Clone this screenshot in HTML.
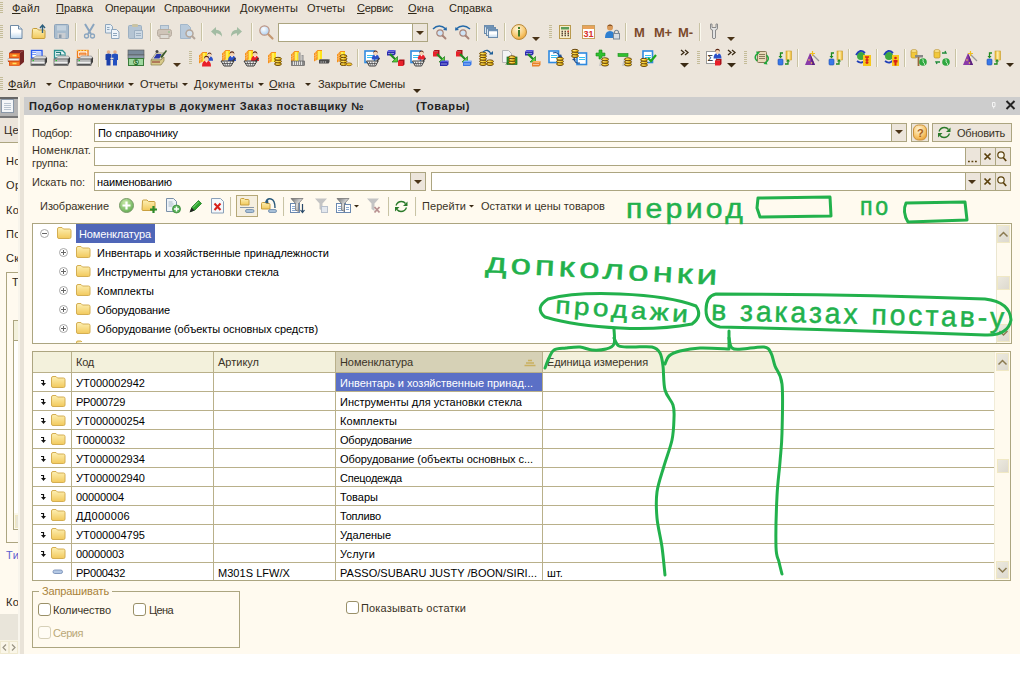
<!DOCTYPE html><html lang="ru"><head><meta charset="utf-8"><title>Подбор номенклатуры</title><style>
html,body{margin:0;padding:0;background:#fff;}
body{width:1022px;height:675px;overflow:hidden;position:relative;font-family:"Liberation Sans",sans-serif;font-size:11px;}
.a{position:absolute;box-sizing:border-box;}
.t{position:absolute;white-space:nowrap;line-height:1;height:1em;}
u{text-decoration:underline;}
svg{position:absolute;overflow:visible;}

</style></head><body>
<div class="a" style="left:0;top:0;width:1020px;height:654px;background:#ece5db"></div>
<div class="a" style="left:278px;top:23px;width:150px;height:19px;background:#fff;border:1px solid #aca580"></div>
<div class="a" style="left:412px;top:24px;width:15px;height:17px;background:#ece5db;border-left:1px solid #aca580"></div>
<div class="a" style="left:0;top:97px;width:18px;height:557px;overflow:hidden;background:#fffaef"><div class="a" style="left:0;top:0;width:18px;height:21px;background:#b4b4b4;border-top:2px solid #666;border-bottom:2px solid #777"></div><div class="a" style="left:0;top:21px;width:18px;height:25px;background:#ece5db;border-bottom:1px solid #aca580"></div><div class="a" style="left:6px;top:175px;width:20px;height:271px;border:1px solid #aca580"></div><div class="a" style="left:13px;top:223px;width:20px;height:210px;border:1px solid #aca580;background:#fff"></div><div class="a" style="left:14px;top:224px;width:20px;height:20px;background:#f3f1dc;border-bottom:1px solid #aca580"></div><div class="a" style="left:14px;top:416px;width:20px;height:16px;background:#fbf8ec"></div><div class="a" style="left:15px;top:418px;width:10px;height:13px;background:#e8e4d4;border:1px solid #f0e8c0"></div><div class="a" style="left:0;top:517px;width:18px;height:26px;background:#e9e5da"></div><div class="a" style="left:0;top:543px;width:18px;height:14px;background:#f7f3e4"></div><span class="t" style="left:4px;top:28px;color:#2e2716;letter-spacing:.4px">Цен</span><span class="t" style="left:6px;top:59px;color:#2e2716;letter-spacing:.4px">Ном</span><span class="t" style="left:6px;top:83px;color:#2e2716;letter-spacing:.4px">Орг</span><span class="t" style="left:6px;top:108px;color:#2e2716;letter-spacing:.4px">Кон</span><span class="t" style="left:6px;top:132px;color:#2e2716;letter-spacing:.4px">Пол</span><span class="t" style="left:6px;top:156px;color:#2e2716;letter-spacing:.4px">Скл</span><span class="t" style="left:12px;top:180px;color:#2e2716;letter-spacing:.4px">То</span><span class="t" style="left:6px;top:453px;color:#5b5fd0;letter-spacing:.4px">Тип</span><span class="t" style="left:6px;top:500px;color:#2e2716;letter-spacing:.4px">Ком</span></div>
<div class="a" style="left:18px;top:97px;width:2px;height:557px;background:#f8f5ec"></div>
<div class="a" style="left:20px;top:97px;width:4px;height:557px;background:#e9e3d8"></div>
<div class="a" style="left:24px;top:97px;width:996px;height:557px;background:#fffaef"></div>
<div class="a" style="left:24px;top:97px;width:996px;height:18px;background:#cdcdcd"></div>
<div class="a" style="left:94px;top:123px;width:813px;height:19px;background:#fff;border:1px solid #aca580;"></div>
<div class="a" style="left:891px;top:124px;width:15px;height:17px;background:#ece5db;border-left:1px solid #aca580"></div>
<div class="a" style="left:911px;top:123px;width:18px;height:19px;background:#ece5db;border:1px solid #aca580;"></div>
<div class="a" style="left:932px;top:123px;width:80px;height:19px;background:#ece5db;border:1px solid #aca580;"></div>
<div class="a" style="left:94px;top:147px;width:917px;height:19px;background:#fff;border:1px solid #aca580;"></div>
<div class="a" style="left:965px;top:148px;width:15px;height:17px;background:#ece5db;border-left:1px solid #aca580"></div>
<div class="a" style="left:980px;top:148px;width:15px;height:17px;background:#ece5db;border-left:1px solid #aca580"></div>
<div class="a" style="left:995px;top:148px;width:15px;height:17px;background:#ece5db;border-left:1px solid #aca580"></div>
<div class="a" style="left:94px;top:172px;width:332px;height:19px;background:#fff;border:1px solid #aca580;"></div>
<div class="a" style="left:410px;top:173px;width:15px;height:17px;background:#ece5db;border-left:1px solid #aca580"></div>
<div class="a" style="left:431px;top:172px;width:580px;height:19px;background:#fff;border:1px solid #aca580;"></div>
<div class="a" style="left:965px;top:173px;width:15px;height:17px;background:#ece5db;border-left:1px solid #aca580"></div>
<div class="a" style="left:980px;top:173px;width:15px;height:17px;background:#ece5db;border-left:1px solid #aca580"></div>
<div class="a" style="left:995px;top:173px;width:15px;height:17px;background:#ece5db;border-left:1px solid #aca580"></div>
<div class="a" style="left:236px;top:195px;width:22px;height:22px;background:#f5efe0;border:1px solid #b5a878;"></div>
<div class="a" style="left:32px;top:223px;width:980px;height:121px;background:#fff;border:1px solid #aca580;"></div>
<div class="a" style="left:996px;top:224px;width:15px;height:119px;background:#fffaee;border-left:1px solid #ebe6d0"></div>
<div class="a" style="left:997px;top:225px;width:13px;height:18px;background:linear-gradient(135deg,#ece9de,#ddd9cf);border:1px solid #f0e8c4"></div>
<div class="a" style="left:997px;top:276px;width:13px;height:14px;background:linear-gradient(135deg,#ece9de,#ddd9cf);border:1px solid #f0e8c4"></div>
<div class="a" style="left:997px;top:324px;width:13px;height:18px;background:linear-gradient(135deg,#ece9de,#ddd9cf);border:1px solid #f0e8c4"></div>
<div class="a" style="left:76px;top:224px;width:79px;height:19px;background:#4f66b8"></div>
<div class="a" style="left:32px;top:351px;width:979px;height:230px;background:#fff;border:1px solid #aca580;"></div>
<div class="a" style="left:33px;top:352px;width:961px;height:20px;background:#f3f1dc"></div>
<div class="a" style="left:336px;top:352px;width:206px;height:20px;background:#d6d1b6"></div>
<div class="a" style="left:336px;top:373px;width:206px;height:18px;background:#5b70c6"></div>
<div class="a" style="left:33px;top:372px;width:961px;height:1px;background:#b9b08a"></div>
<div class="a" style="left:33px;top:391px;width:961px;height:1px;background:#b9b08a"></div>
<div class="a" style="left:33px;top:410px;width:961px;height:1px;background:#b9b08a"></div>
<div class="a" style="left:33px;top:429px;width:961px;height:1px;background:#b9b08a"></div>
<div class="a" style="left:33px;top:448px;width:961px;height:1px;background:#b9b08a"></div>
<div class="a" style="left:33px;top:467px;width:961px;height:1px;background:#b9b08a"></div>
<div class="a" style="left:33px;top:486px;width:961px;height:1px;background:#b9b08a"></div>
<div class="a" style="left:33px;top:505px;width:961px;height:1px;background:#b9b08a"></div>
<div class="a" style="left:33px;top:524px;width:961px;height:1px;background:#b9b08a"></div>
<div class="a" style="left:33px;top:543px;width:961px;height:1px;background:#b9b08a"></div>
<div class="a" style="left:33px;top:562px;width:961px;height:1px;background:#b9b08a"></div>
<div class="a" style="left:71px;top:352px;width:1px;height:228px;background:#b9b08a"></div>
<div class="a" style="left:213px;top:352px;width:1px;height:228px;background:#b9b08a"></div>
<div class="a" style="left:335px;top:352px;width:1px;height:228px;background:#b9b08a"></div>
<div class="a" style="left:542px;top:352px;width:1px;height:228px;background:#b9b08a"></div>
<div class="a" style="left:994px;top:352px;width:16px;height:228px;background:#fffaee;border-left:1px solid #f1ecd8"></div>
<div class="a" style="left:996px;top:353px;width:13px;height:18px;background:linear-gradient(135deg,#ece9de,#ddd9cf);border:1px solid #f0e8c4"></div>
<div class="a" style="left:997px;top:459px;width:12px;height:14px;background:linear-gradient(135deg,#ece9de,#ddd9cf);border:1px solid #f0e8c4"></div>
<div class="a" style="left:996px;top:561px;width:13px;height:18px;background:linear-gradient(135deg,#ece9de,#ddd9cf);border:1px solid #f0e8c4"></div>
<div class="a" style="left:32px;top:591px;width:208px;height:57px;background:transparent;border:1px solid #aca580;"></div>
<div class="a" style="left:39px;top:588px;width:73px;height:8px;background:#fffaef"></div>
<div class="a" style="left:38px;top:603px;width:13px;height:13px;background:#fff;border:1px solid #9a9068;border-radius:3px;"></div>
<div class="a" style="left:133px;top:603px;width:13px;height:13px;background:#fff;border:1px solid #9a9068;border-radius:3px;"></div>
<div class="a" style="left:38px;top:626px;width:13px;height:13px;background:#fffcf4;border:1px solid #d6d0b8;border-radius:3px;"></div>
<div class="a" style="left:346px;top:601px;width:13px;height:13px;background:#fff;border:1px solid #9a9068;border-radius:3px;"></div>
<span class="t" style="left:12px;top:3px;font-size:11px;color:#2e2716;letter-spacing:0.234px;"><u>Ф</u>айл</span>
<span class="t" style="left:56px;top:3px;font-size:11px;color:#2e2716;letter-spacing:-0.029px;"><u>П</u>равка</span>
<span class="t" style="left:105px;top:3px;font-size:11px;color:#2e2716;letter-spacing:-0.184px;">Операции</span>
<span class="t" style="left:164px;top:3px;font-size:11px;color:#2e2716;letter-spacing:-0.058px;">Справочники</span>
<span class="t" style="left:240px;top:3px;font-size:11px;color:#2e2716;letter-spacing:0.144px;">Документы</span>
<span class="t" style="left:307px;top:3px;font-size:11px;color:#2e2716;letter-spacing:-0.005px;">Отчеты</span>
<span class="t" style="left:357px;top:3px;font-size:11px;color:#2e2716;letter-spacing:-0.281px;"><u>С</u>ервис</span>
<span class="t" style="left:408px;top:3px;font-size:11px;color:#2e2716;letter-spacing:0.105px;"><u>О</u>кна</span>
<span class="t" style="left:449px;top:3px;font-size:11px;color:#2e2716;letter-spacing:-0.025px;">Сп<u>р</u>авка</span>
<span class="t" style="left:8px;top:79px;font-size:11px;color:#2e2716;letter-spacing:0.234px;"><u>Ф</u>айл</span>
<span class="t" style="left:58px;top:79px;font-size:11px;color:#2e2716;letter-spacing:-0.058px;">Справочники</span>
<span class="t" style="left:140px;top:79px;font-size:11px;color:#2e2716;letter-spacing:-0.005px;">Отчеты</span>
<span class="t" style="left:194px;top:79px;font-size:11px;color:#2e2716;letter-spacing:0.366px;">Документы</span>
<span class="t" style="left:269px;top:79px;font-size:11px;color:#2e2716;letter-spacing:0.105px;"><u>О</u>кна</span>
<span class="t" style="left:318px;top:79px;font-size:11px;color:#2e2716;letter-spacing:-0.040px;">Закрытие Смены</span>
<span class="t" style="left:634px;top:26px;font-size:13px;color:#7b4a2b;font-weight:bold;letter-spacing:0.156px;">M</span>
<span class="t" style="left:654px;top:26px;font-size:13px;color:#7b4a2b;font-weight:bold;letter-spacing:-0.211px;">M+</span>
<span class="t" style="left:678px;top:26px;font-size:13px;color:#7b4a2b;font-weight:bold;letter-spacing:-0.086px;">M-</span>
<span class="t" style="left:29px;top:101px;font-size:11px;color:#222;font-weight:bold;letter-spacing:0.579px;">Подбор номенклатуры в документ Заказ поставщику №</span>
<span class="t" style="left:416px;top:101px;font-size:11px;color:#222;font-weight:bold;letter-spacing:0.635px;">(Товары)</span>
<span class="t" style="left:32px;top:128px;font-size:11px;color:#3a3326;letter-spacing:-0.257px;">Подбор:</span>
<span class="t" style="left:32px;top:145px;font-size:11px;color:#3a3326;letter-spacing:0.108px;">Номенклат.</span>
<span class="t" style="left:32px;top:158px;font-size:11px;color:#3a3326;letter-spacing:-0.085px;">группа:</span>
<span class="t" style="left:32px;top:177px;font-size:11px;color:#3a3326;letter-spacing:-0.030px;">Искать по:</span>
<span class="t" style="left:98px;top:128px;font-size:11px;color:#000;letter-spacing:-0.055px;">По справочнику</span>
<span class="t" style="left:957px;top:128px;font-size:11px;color:#3a3326;letter-spacing:-0.227px;">Обновить</span>
<span class="t" style="left:97px;top:177px;font-size:11px;color:#000;letter-spacing:-0.128px;">наименованию</span>
<span class="t" style="left:40px;top:201px;font-size:11px;color:#3a3326;letter-spacing:-0.027px;">Изображение</span>
<span class="t" style="left:422px;top:201px;font-size:11px;color:#3a3326;letter-spacing:0.058px;">Перейти</span>
<span class="t" style="left:481px;top:201px;font-size:11px;color:#3a3326;letter-spacing:0.028px;">Остатки и цены товаров</span>
<span class="t" style="left:79px;top:229px;font-size:11px;color:#fff;letter-spacing:-0.152px;">Номенклатура</span>
<span class="t" style="left:97px;top:248px;font-size:11px;color:#000;letter-spacing:-0.016px;">Инвентарь и хозяйственные принадлежности</span>
<span class="t" style="left:97px;top:267px;font-size:11px;color:#000;letter-spacing:0.017px;">Инструменты для установки стекла</span>
<span class="t" style="left:97px;top:286px;font-size:11px;color:#000;letter-spacing:0.059px;">Комплекты</span>
<span class="t" style="left:97px;top:305px;font-size:11px;color:#000;letter-spacing:-0.152px;">Оборудование</span>
<span class="t" style="left:97px;top:324px;font-size:11px;color:#000;letter-spacing:-0.069px;">Оборудование (объекты основных средств)</span>
<span class="t" style="left:76px;top:357px;font-size:11px;color:#3a3326;letter-spacing:-0.234px;">Код</span>
<span class="t" style="left:218px;top:357px;font-size:11px;color:#3a3326;letter-spacing:-0.002px;">Артикул</span>
<span class="t" style="left:340px;top:357px;font-size:11px;color:#3a3326;letter-spacing:-0.069px;">Номенклатура</span>
<span class="t" style="left:547px;top:357px;font-size:11px;color:#3a3326;letter-spacing:-0.110px;">Единица измерения</span>
<span class="t" style="left:76px;top:378px;font-size:11px;color:#000;letter-spacing:0.020px;">УТ000002942</span>
<span class="t" style="left:76px;top:397px;font-size:11px;color:#000;letter-spacing:-0.299px;">РР000729</span>
<span class="t" style="left:76px;top:416px;font-size:11px;color:#000;letter-spacing:0.020px;">УТ000000254</span>
<span class="t" style="left:76px;top:435px;font-size:11px;color:#000;letter-spacing:-0.068px;">Т0000032</span>
<span class="t" style="left:76px;top:454px;font-size:11px;color:#000;letter-spacing:0.020px;">УТ000002934</span>
<span class="t" style="left:76px;top:473px;font-size:11px;color:#000;letter-spacing:0.020px;">УТ000002940</span>
<span class="t" style="left:76px;top:492px;font-size:11px;color:#000;letter-spacing:-0.119px;">00000004</span>
<span class="t" style="left:76px;top:511px;font-size:11px;color:#000;letter-spacing:0.299px;">ДД000006</span>
<span class="t" style="left:76px;top:530px;font-size:11px;color:#000;letter-spacing:0.020px;">УТ000004795</span>
<span class="t" style="left:76px;top:549px;font-size:11px;color:#000;letter-spacing:-0.119px;">00000003</span>
<span class="t" style="left:76px;top:568px;font-size:11px;color:#000;letter-spacing:-0.299px;">РР000432</span>
<span class="t" style="left:340px;top:378px;font-size:11px;color:#fff;letter-spacing:-0.004px;">Инвентарь и хозяйственные принад...</span>
<span class="t" style="left:340px;top:397px;font-size:11px;color:#000;letter-spacing:0.017px;">Инструменты для установки стекла</span>
<span class="t" style="left:340px;top:416px;font-size:11px;color:#000;letter-spacing:0.059px;">Комплекты</span>
<span class="t" style="left:340px;top:435px;font-size:11px;color:#000;letter-spacing:-0.236px;">Оборудование</span>
<span class="t" style="left:340px;top:454px;font-size:11px;color:#000;letter-spacing:-0.039px;">Оборудование (объекты основных с...</span>
<span class="t" style="left:340px;top:473px;font-size:11px;color:#000;letter-spacing:-0.239px;">Спецодежда</span>
<span class="t" style="left:340px;top:492px;font-size:11px;color:#000;letter-spacing:0.026px;">Товары</span>
<span class="t" style="left:340px;top:511px;font-size:11px;color:#000;letter-spacing:-0.192px;">Топливо</span>
<span class="t" style="left:340px;top:530px;font-size:11px;color:#000;letter-spacing:-0.039px;">Удаленые</span>
<span class="t" style="left:340px;top:549px;font-size:11px;color:#000;letter-spacing:0.195px;">Услуги</span>
<span class="t" style="left:340px;top:568px;font-size:11px;color:#000;letter-spacing:0.037px;">PASSO/SUBARU JUSTY /BOON/SIRI...</span>
<span class="t" style="left:218px;top:568px;font-size:11px;color:#000;letter-spacing:0.043px;">M301S LFW/X</span>
<span class="t" style="left:547px;top:568px;font-size:11px;color:#000;letter-spacing:0.099px;">шт.</span>
<span class="t" style="left:42px;top:586px;font-size:11px;color:#a8823a;letter-spacing:-0.118px;">Запрашивать</span>
<span class="t" style="left:53px;top:605px;font-size:11px;color:#3a3326;letter-spacing:-0.108px;">Количество</span>
<span class="t" style="left:149px;top:605px;font-size:11px;color:#3a3326;letter-spacing:-0.613px;">Цена</span>
<span class="t" style="left:53px;top:628px;font-size:11px;color:#b9a878;letter-spacing:-0.456px;">Серия</span>
<span class="t" style="left:361px;top:603px;font-size:11px;color:#3a3326;letter-spacing:0.174px;">Показывать остатки</span>
<svg width="1022" height="675" style="left:0;top:0" viewBox="0 0 1022 675" fill="none"><defs>
<linearGradient id="gpage" x1="0" y1="0" x2="0" y2="1"><stop offset="0" stop-color="#fff"/><stop offset=".5" stop-color="#fff"/><stop offset="1" stop-color="#bfd8ee"/></linearGradient>
<linearGradient id="gfold" x1="0" y1="0" x2="0" y2="1"><stop offset="0" stop-color="#fdf0b4"/><stop offset="1" stop-color="#f2c95c"/></linearGradient>
<radialGradient id="glens" cx=".4" cy=".35" r=".7"><stop offset="0" stop-color="#fff"/><stop offset="1" stop-color="#a8cdf0"/></radialGradient>
<radialGradient id="ginfo" cx=".4" cy=".3" r=".8"><stop offset="0" stop-color="#fff4d8"/><stop offset=".6" stop-color="#f7c870"/><stop offset="1" stop-color="#e89a2a"/></radialGradient>
<radialGradient id="ggreen" cx=".4" cy=".3" r=".8"><stop offset="0" stop-color="#c8e8a8"/><stop offset="1" stop-color="#5aa84a"/></radialGradient>
<linearGradient id="gcyl" x1="0" y1="0" x2="1" y2="0"><stop offset="0" stop-color="#e8b020"/><stop offset=".5" stop-color="#fff0b0"/><stop offset="1" stop-color="#e8b020"/></linearGradient>
<linearGradient id="gfun" x1="0" y1="0" x2="1" y2="1"><stop offset="0" stop-color="#6e6e6e"/><stop offset=".5" stop-color="#d8d8d8"/><stop offset="1" stop-color="#8a8a8a"/></linearGradient>
</defs><rect x="0" y="25" width="3" height="1" fill="#c4bc98"/><rect x="0" y="27" width="3" height="1" fill="#c4bc98"/><rect x="0" y="29" width="3" height="1" fill="#c4bc98"/><rect x="0" y="31" width="3" height="1" fill="#c4bc98"/><rect x="0" y="33" width="3" height="1" fill="#c4bc98"/><rect x="0" y="35" width="3" height="1" fill="#c4bc98"/><rect x="0" y="37" width="3" height="1" fill="#c4bc98"/><rect x="0" y="2" width="3" height="1" fill="#c4bc98"/><rect x="0" y="4" width="3" height="1" fill="#c4bc98"/><rect x="0" y="6" width="3" height="1" fill="#c4bc98"/><rect x="0" y="8" width="3" height="1" fill="#c4bc98"/><rect x="0" y="10" width="3" height="1" fill="#c4bc98"/><rect x="0" y="12" width="3" height="1" fill="#c4bc98"/><rect x="0" y="77" width="3" height="1" fill="#c4bc98"/><rect x="0" y="79" width="3" height="1" fill="#c4bc98"/><rect x="0" y="81" width="3" height="1" fill="#c4bc98"/><rect x="0" y="83" width="3" height="1" fill="#c4bc98"/><rect x="0" y="85" width="3" height="1" fill="#c4bc98"/><rect x="0" y="87" width="3" height="1" fill="#c4bc98"/><rect x="0" y="89" width="3" height="1" fill="#c4bc98"/><g transform="translate(10,25)"><path d="M.5 .5h8l3.500 3.500v9.500h-11.500z" fill="url(#gpage)" stroke="#6f8aa6"/><path d="M8.500 .5v3.500h3.500" fill="#dfe9f2" stroke="#6f8aa6"/></g><g transform="translate(32,24)"><path d="M.5 5.500q0-1 1-1h3.500l1.500 1.500h5.500q1 0 1 1v6.500q0 1-1 1h-11q-1 0-1-1z" fill="url(#gfold)" stroke="#c59d3b"/><path d="M10.500 9V1.500M8 4l2.500-3l2.500 3" stroke="#2d5f7e" stroke-width="1.400" fill="none"/></g><g transform="translate(54,24)"><rect x=".5" y=".5" width="14" height="14" rx="1" fill="#a9bccd" stroke="#8ea4ba"/><rect x="3" y="1.500" width="9" height="5" fill="#c4d2de"/><rect x="3.500" y="9" width="8" height="5.500" fill="#c9cdd2"/><rect x="5" y="10.500" width="2.500" height="3.500" fill="#8b9aa8"/></g><path d="M75.5 23V41" stroke="#c9c3a4"/><path d="M76.5 23V41" stroke="#fbf9ef"/><g transform="translate(84,24)"><path d="M1 0l6 10M10 0l-6 10" stroke="#8aa5bf" stroke-width="2" fill="none"/><circle cx="2.500" cy="12" r="2" fill="none" stroke="#8aa5bf" stroke-width="1.300"/><circle cx="8.500" cy="12" r="2" fill="none" stroke="#8aa5bf" stroke-width="1.300"/></g><g transform="translate(105,24)"><path d="M.5 .5h5l2 2v6.500h-7z" fill="#e6eef5" stroke="#8ea6bd"/><path d="M6.500 5.500h5l2.500 2.500v6.500h-7.500z" fill="#f0f5fa" stroke="#8ea6bd"/><path d="M8 9.500h4M8 11.500h4M2 3.500h2.500M2 5.500h2.500" stroke="#8ea6bd"/></g><g transform="translate(128,24)"><rect x=".5" y="1.500" width="13" height="13" rx="1" fill="#b4c4d3" stroke="#9db0c2"/><rect x="4" y="0" width="6" height="3" rx="1" fill="#c9c3a4"/><path d="M6.500 6.500h8v8h-8z" fill="#cdd9e4" stroke="#9db0c2"/><path d="M8 9.500h5M8 11.500h5" stroke="#9db0c2"/></g><path d="M150.5 23V41" stroke="#c9c3a4"/><path d="M151.5 23V41" stroke="#fbf9ef"/><g transform="translate(157,25)"><rect x="3.500" y=".5" width="8" height="5" fill="#c5d2de" stroke="#a4b5c5"/><rect x=".5" y="4.500" width="14" height="7" rx="2" fill="#cfc4b8" stroke="#b7aca0"/><rect x="3" y="9.500" width="9" height="4" fill="#dedbd4" stroke="#b7aca0"/><circle cx="12" cy="7" r=".8" fill="#7cc27c"/></g><g transform="translate(180,24)"><path d="M.5 .5h7l3 3v11h-10z" fill="#b9cadb" stroke="#a3b7ca"/><circle cx="9.500" cy="9.500" r="3.500" fill="#d2e0ec" stroke="#b3a59a" stroke-width="1.500"/><path d="M12 12l3 3" stroke="#b3a59a" stroke-width="2"/></g><path d="M201.5 23V41" stroke="#c9c3a4"/><path d="M202.5 23V41" stroke="#fbf9ef"/><g transform="translate(211,27)"><path d="M0 4.500l5-4.500v2.800q6 0 6 7q-2-3.500-6-3.500v2.800z" fill="#a3bca3"/></g><g transform="translate(231,27)"><path d="M11 4.500l-5-4.500v2.800q-6 0-6 7q2-3.500 6-3.500v2.800z" fill="#a3bca3"/></g><path d="M251.5 23V41" stroke="#c9c3a4"/><path d="M252.5 23V41" stroke="#fbf9ef"/><g transform="translate(259,25)"><circle cx="5.500" cy="5.500" r="4.700" fill="url(#glens)" stroke="#bc9484" stroke-width="1.200"/><path d="M9.500 9.500l4 4" stroke="#c49872" stroke-width="2.200" stroke-linecap="round"/></g><path d="M416 31h8l-4 4z" fill="#4a3418"/><g transform="translate(432,24)"><circle cx="8" cy="9" r="3.200" fill="#cfe3f5" stroke="#a88478" stroke-width="1.200"/><path d="M10.500 11.500l3 3" stroke="#a88478" stroke-width="1.900" stroke-linecap="round"/><path d="M1 5q6-6 13 0" stroke="#2469a8" stroke-width="1.500" fill="none"/><path d="M15 6.500l-4-.5l3.500-3z" fill="#2469a8"/></g><g transform="translate(455,24)"><circle cx="8" cy="9" r="3.200" fill="#cfe3f5" stroke="#a88478" stroke-width="1.200"/><path d="M10.500 11.500l3 3" stroke="#a88478" stroke-width="1.900" stroke-linecap="round"/><path d="M1 5q7-6 14 0" stroke="#2469a8" stroke-width="1.500" fill="none"/><path d="M0 6.500l4-.5l-3.500-3z" fill="#2469a8"/></g><path d="M476.5 23V41" stroke="#c9c3a4"/><path d="M477.5 23V41" stroke="#fbf9ef"/><g transform="translate(484,25)"><rect x=".5" y=".5" width="9" height="8" fill="#dbe6f0" stroke="#6b8bab"/><rect x="2.500" y="2.500" width="9" height="8" fill="#dbe6f0" stroke="#6b8bab"/><rect x="4.500" y="4.500" width="9" height="8" fill="url(#gpage)" stroke="#6b8bab"/><path d="M1 1.500h8M3 3.500h8M5 5.500h8" stroke="#6f93b8" stroke-width="1.300"/></g><path d="M504.5 23V41" stroke="#c9c3a4"/><path d="M505.5 23V41" stroke="#fbf9ef"/><g transform="translate(511,24)"><circle cx="8" cy="8" r="7.500" fill="url(#ginfo)" stroke="#b98a3c"/><rect x="7" y="6" width="2" height="6.500" fill="#3f7d2a"/><rect x="7" y="3" width="2" height="2" fill="#3f7d2a"/></g><path d="M532 37h8l-4 4z" fill="#4a3418"/><rect x="549" y="25" width="3" height="1" fill="#c4bc98"/><rect x="549" y="27" width="3" height="1" fill="#c4bc98"/><rect x="549" y="29" width="3" height="1" fill="#c4bc98"/><rect x="549" y="31" width="3" height="1" fill="#c4bc98"/><rect x="549" y="33" width="3" height="1" fill="#c4bc98"/><rect x="549" y="35" width="3" height="1" fill="#c4bc98"/><rect x="549" y="37" width="3" height="1" fill="#c4bc98"/><g transform="translate(559,25)"><rect x=".5" y=".5" width="11" height="13" fill="#f6edc8" stroke="#b99a4e"/><rect x="2" y="2" width="8" height="2.500" fill="#5a9c5a"/><path d="M2.500 6.500h1.500M5.500 6.500h1.500M8.500 6.500h1.500M2.500 8.500h1.500M5.500 8.500h1.500M8.500 8.500h1.500M2.500 10.500h1.500M5.500 10.500h1.500M8.500 10.500h1.500" stroke="#5a4a3a" stroke-width="1.300"/><path d="M8.500 6.500h1.500" stroke="#d83a2a" stroke-width="1.300"/></g><g transform="translate(582,25)"><rect x=".5" y=".5" width="12" height="13" fill="#fff" stroke="#c8a060"/><rect x="1" y="1" width="11" height="3" fill="#e9a35a"/><text x="1.500" y="12" font-size="9" font-family="'Liberation Sans',sans-serif" fill="#d8302a" font-weight="bold" textLength="10">31</text></g><g transform="translate(605,24)"><circle cx="5" cy="3.500" r="3" fill="#d99a5a"/><path d="M2 2.500q3-4 6 0q-3-1.500-6 0" fill="#7a4a20"/><path d="M0 14q0-7 5-7q5 0 5 7z" fill="#2f7fd0"/><rect x="8.500" y="9.500" width="6" height="5.500" fill="#d8dde2" stroke="#7a8896"/><path d="M9.500 9.500v-2q2-2.500 4 0v2" fill="none" stroke="#7a8896" stroke-width="1.200"/></g><path d="M625.5 23V41" stroke="#c9c3a4"/><path d="M626.5 23V41" stroke="#fbf9ef"/><path d="M699.5 23V41" stroke="#c9c3a4"/><path d="M700.5 23V41" stroke="#fbf9ef"/><g transform="translate(708,24)"><path d="M2.500 0v4q0 2 2 2v8q1.500 1.500 3 0v-8q2 0 2-2v-4h-1.500v3.500h-4v-3.500z" fill="#e3e3e3" stroke="#8a8a8a"/></g><path d="M727 37h8l-4 4z" fill="#4a3418"/><rect x="0" y="51" width="3" height="1" fill="#c4bc98"/><rect x="0" y="53" width="3" height="1" fill="#c4bc98"/><rect x="0" y="55" width="3" height="1" fill="#c4bc98"/><rect x="0" y="57" width="3" height="1" fill="#c4bc98"/><rect x="0" y="59" width="3" height="1" fill="#c4bc98"/><rect x="0" y="61" width="3" height="1" fill="#c4bc98"/><rect x="0" y="63" width="3" height="1" fill="#c4bc98"/><g transform="translate(8,50)"><path d="M1 3l4-3h11l-4 3z" fill="#8a2f2f"/><path d="M12 3l4-3v12l-4 3.500z" fill="#742424"/><rect x="1" y="3" width="11" height="12.500" fill="#f2601c"/><rect x="1.500" y="3.500" width="10" height="4" fill="#f77a22" stroke="#d84a10" stroke-width=".6"/><path d="M0 8.500h11v3h-11z" fill="#f4f4f4" stroke="#999" stroke-width=".5"/><path d="M0 10.500h11.500v1.500h-11.500z" fill="#c84a18"/><rect x="1.500" y="11.500" width="10" height="3.800" fill="#f77a22" stroke="#d84a10" stroke-width=".6"/><path d="M4.500 5.500h4M4.500 13.500h4" stroke="#ffe060" stroke-width="1.300"/></g><g transform="translate(30,50)"><rect x="1.500" y=".5" width="10.500" height="7.500" fill="#fff" stroke="#2a5af0" stroke-width="1.400"/><path d="M2 2.500h4M2 4.500h4M7 2v5M9 2v5M11 2v5" stroke="#7a9af8" stroke-width="1"/><path d="M2.500 9l3-3h10l1.500 3z" fill="#dcdcdc" stroke="#777" stroke-width=".5"/><path d="M14.500 9.500l2.500-2.500v5l-2.500 3.500z" fill="#3c3c3c"/><rect x="1" y="9" width="14" height="6.500" fill="#b9b9b9" stroke="#555" stroke-width=".7"/><path d="M1.500 12.500h13" stroke="#f0f0f0" stroke-width="1.200"/><path d="M1.500 14.500h13" stroke="#555" stroke-width="1"/><rect x="2.500" y="10" width="1.500" height="1.200" fill="#2fc02f"/></g><g transform="translate(53,50)"><path d="M1.500 .5h8l2.500 2.500v5h-10.500z" fill="#e8f6f6" stroke="#2a9090" stroke-width="1.300"/><path d="M3 2.500h4.500v2.500h-4.500M3 5h8" stroke="#1f7a7a" stroke-width="1.200" fill="none"/><path d="M2.500 9l3-3h10l1.500 3z" fill="#dcdcdc" stroke="#777" stroke-width=".5"/><path d="M14.500 9.500l2.500-2.500v5l-2.500 3.500z" fill="#3c3c3c"/><rect x="1" y="9" width="14" height="6.500" fill="#b9b9b9" stroke="#555" stroke-width=".7"/><path d="M1.500 12.500h13" stroke="#f0f0f0" stroke-width="1.200"/><path d="M1.500 14.500h13" stroke="#555" stroke-width="1"/><rect x="2.500" y="10" width="1.500" height="1.200" fill="#2fc02f"/></g><g transform="translate(76,50)"><rect x="1.500" y=".5" width="10.500" height="7" fill="#fff4e6" stroke="#f07a1a" stroke-width="1.300"/><path d="M1 .5h11.500" stroke="#ffd84a" stroke-dasharray="1.500 1.500" stroke-width="1.200"/><path d="M3.500 5.500v-2.500h6.500v2.500" fill="#f7a060" stroke="#f07a1a" stroke-width=".8"/><path d="M2.500 9l3-3h10l1.500 3z" fill="#dcdcdc" stroke="#777" stroke-width=".5"/><path d="M14.500 9.500l2.500-2.500v5l-2.500 3.500z" fill="#3c3c3c"/><rect x="1" y="9" width="14" height="6.500" fill="#b9b9b9" stroke="#555" stroke-width=".7"/><path d="M1.500 12.500h13" stroke="#f0f0f0" stroke-width="1.200"/><path d="M1.500 14.500h13" stroke="#555" stroke-width="1"/><rect x="2.500" y="10" width="1.500" height="1.200" fill="#2fc02f"/></g><path d="M98.5 49V67" stroke="#c9c3a4"/><path d="M99.5 49V67" stroke="#fbf9ef"/><g transform="translate(105,50)"><circle cx="3.500" cy="2" r="1.800" fill="#e8b088"/><circle cx="10" cy="2" r="1.800" fill="#e8b088"/><path d="M.5 5q0-1.500 3-1.500q3 0 3 1.500v5h-1v5.500h-4v-5.500h-1z" fill="#1c3faa"/><path d="M7 5q0-1.500 3-1.500q3 0 3 1.500v5h-1v5.500h-4v-5.500h-1z" fill="#2450c0"/><path d="M5.500 8.500h3" stroke="#f0e0d0" stroke-width="1.500"/></g><g transform="translate(128,50)"><rect x="0" y="0" width="16" height="5" fill="#7a8a9a" stroke="#555" stroke-width=".6"/><rect x="0" y="5" width="16" height="4" fill="#8a9aa8" stroke="#555" stroke-width=".6"/><rect x=".5" y="8.500" width="15" height="7" fill="#9fd89f" stroke="#3a7a3a"/><circle cx="8" cy="12" r="2.600" fill="#d6f2d6" stroke="#3a7a3a" stroke-width=".8"/><text x="6.300" y="14.500" font-size="6.500" fill="#1a6a1a" font-family="'Liberation Sans',sans-serif" font-weight="bold">$</text></g><g transform="translate(151,50)"><path d="M0 10l5-7h8l-3 7z" fill="#e9e4c9" stroke="#8a8468" stroke-width=".7"/><path d="M0 10h10l3-3v4l-3 4h-10z" fill="#d8c98a" stroke="#8a8048" stroke-width=".7"/><path d="M2.500 8.500l3-4.500h5l-2 4.500z" fill="#2a38a8"/><path d="M9 7l6-7l1 1l-5 7z" fill="#3a5a2a"/><circle cx="6" cy="1.500" r="1.500" fill="#444"/><path d="M1 12h8" stroke="#8a2a2a"/></g><path d="M173 63h8l-4 4z" fill="#4a3418"/><rect x="189" y="51" width="3" height="1" fill="#c4bc98"/><rect x="189" y="53" width="3" height="1" fill="#c4bc98"/><rect x="189" y="55" width="3" height="1" fill="#c4bc98"/><rect x="189" y="57" width="3" height="1" fill="#c4bc98"/><rect x="189" y="59" width="3" height="1" fill="#c4bc98"/><rect x="189" y="61" width="3" height="1" fill="#c4bc98"/><rect x="189" y="63" width="3" height="1" fill="#c4bc98"/><g transform="translate(198,50)"><g transform="translate(1,2)"><path d="M0 3.500l3.500-3.500h4.500v9.500h-4.500l-3.500 2z" fill="#f4901c"/><path d="M3.500 1h4.500v9h-4.500z" fill="#ffe41a"/><path d="M5 1v9" stroke="#fff7a0" stroke-width="1"/><path d="M0 5.800l3.500-2M0 8.200l3.500-2M1.800 2v9" stroke="#ffc070" stroke-width=".7"/></g><g transform="translate(11.5,3.5) scale(0.7)"><path d="M-5 10.500q0-6.500 5-6.500q5 0 5 6.500z" fill="#2b50c8"/><path d="M-1.500 4.500l1.500 2l1.500-2z" fill="#fff"/><circle cx="0" cy="2.300" r="2.600" fill="#f6d4b4"/><path d="M-2.900 2.500q-.2-4 2.900-4q3.100 0 2.900 4q-.5-2.500-2.900-2.500q-2.400 0-2.900 2.500" fill="#5a2410"/></g><g transform="translate(8.5,7) scale(0.9)"><path d="M-5 10.500q0-6.500 5-6.500q5 0 5 6.500z" fill="#e8202a"/><path d="M-1.500 4.500l1.500 2l1.500-2z" fill="#fff"/><circle cx="0" cy="2.300" r="2.600" fill="#f6d4b4"/><path d="M-2.900 2.500q-.2-4 2.900-4q3.100 0 2.900 4q-.5-2.500-2.900-2.500q-2.400 0-2.900 2.500" fill="#5a2410"/></g></g><g transform="translate(221,50)"><g transform="translate(1,0)"><path d="M0 3.500l3.500-3.500h4.500v9.500h-4.500l-3.500 2z" fill="#f4901c"/><path d="M3.500 1h4.500v9h-4.500z" fill="#ffe41a"/><path d="M5 1v9" stroke="#fff7a0" stroke-width="1"/><path d="M0 5.800l3.500-2M0 8.200l3.500-2M1.800 2v9" stroke="#ffc070" stroke-width=".7"/></g><g transform="translate(11,2.5) scale(0.8)"><path d="M-5 10.500q0-6.500 5-6.500q5 0 5 6.500z" fill="#2b50c8"/><path d="M-1.500 4.500l1.500 2l1.500-2z" fill="#fff"/><circle cx="0" cy="2.300" r="2.600" fill="#f6d4b4"/><path d="M-2.900 2.500q-.2-4 2.900-4q3.100 0 2.900 4q-.5-2.500-2.900-2.500q-2.400 0-2.900 2.500" fill="#5a2410"/></g><g transform="translate(0,1.500)"><path d="M0 9.500h13l-3 5h-7z" fill="#f0f0f0" stroke="#3a3a3a" stroke-width="1"/><path d="M3 10l1.500 4M6 10l.5 4M9.500 10l-1 4M1.500 12h10" stroke="#3a3a3a" stroke-width=".7"/><path d="M11.500 10l3-3.500" stroke="#3a3a3a" stroke-width="1.300"/></g></g><g transform="translate(244,50)"><g transform="translate(1,0)"><path d="M0 3.500l3.500-3.500h4.500v9.500h-4.500l-3.500 2z" fill="#f4901c"/><path d="M3.500 1h4.500v9h-4.500z" fill="#ffe41a"/><path d="M5 1v9" stroke="#fff7a0" stroke-width="1"/><path d="M0 5.800l3.500-2M0 8.200l3.500-2M1.800 2v9" stroke="#ffc070" stroke-width=".7"/></g><g transform="translate(11,2.5) scale(0.8)"><path d="M-5 10.500q0-6.500 5-6.500q5 0 5 6.500z" fill="#e8202a"/><path d="M-1.500 4.500l1.500 2l1.500-2z" fill="#fff"/><circle cx="0" cy="2.300" r="2.600" fill="#f6d4b4"/><path d="M-2.900 2.500q-.2-4 2.900-4q3.100 0 2.900 4q-.5-2.500-2.900-2.500q-2.400 0-2.900 2.500" fill="#5a2410"/></g><g transform="translate(0,1.500)"><path d="M0 9.500h13l-3 5h-7z" fill="#f0f0f0" stroke="#3a3a3a" stroke-width="1"/><path d="M3 10l1.500 4M6 10l.5 4M9.500 10l-1 4M1.500 12h10" stroke="#3a3a3a" stroke-width=".7"/><path d="M11.500 10l3-3.500" stroke="#3a3a3a" stroke-width="1.300"/></g></g><g transform="translate(267,50)"><g transform="translate(1,2)"><path d="M0 3.500l3.500-3.500h4.500v9.500h-4.500l-3.500 2z" fill="#f4901c"/><path d="M3.500 1h4.500v9h-4.500z" fill="#ffe41a"/><path d="M5 1v9" stroke="#fff7a0" stroke-width="1"/><path d="M0 5.800l3.500-2M0 8.200l3.500-2M1.800 2v9" stroke="#ffc070" stroke-width=".7"/></g><ellipse cx="11" cy="14" rx="3.400" ry="1.500" fill="#f2c21a" stroke="#5a3a08" stroke-width=".9"/><path d="M9 13.7h2.500" stroke="#fff3b0" stroke-width=".7"/><ellipse cx="11" cy="11.4" rx="3.400" ry="1.500" fill="#f2c21a" stroke="#5a3a08" stroke-width=".9"/><path d="M9 11.1h2.500" stroke="#fff3b0" stroke-width=".7"/><ellipse cx="11" cy="8.8" rx="3.400" ry="1.500" fill="#f2c21a" stroke="#5a3a08" stroke-width=".9"/><path d="M9 8.5h2.500" stroke="#fff3b0" stroke-width=".7"/></g><g transform="translate(290,50)"><g transform="translate(1,1)"><path d="M0 3.500l3.500-3.500h4.500v9.500h-4.500l-3.500 2z" fill="#f4901c"/><path d="M3.500 1h4.500v9h-4.500z" fill="#ffe41a"/><path d="M5 1v9" stroke="#fff7a0" stroke-width="1"/><path d="M0 5.800l3.500-2M0 8.200l3.500-2M1.800 2v9" stroke="#ffc070" stroke-width=".7"/></g><path d="M9.500 12v-9.500M12.500 12v-7" stroke="#8a8a8a" stroke-width="2"/><path d="M9 12v-9M12 12v-6.500" stroke="#d8d8d8" stroke-width=".8"/><rect x="1.500" y="11" width="13" height="4.500" fill="#8a8a8a" stroke="#555" stroke-width=".6"/><path d="M3.500 11.500v3.500M5.500 11.500v3.500M7.500 11.500v3.500M9.500 11.500v3.500M11.500 11.500v3.500" stroke="#eee" stroke-width=".9"/></g><g transform="translate(313,50)"><g transform="translate(1,0)"><path d="M0 3.500l3.500-3.500h4.500v9.500h-4.500l-3.500 2z" fill="#f4901c"/><path d="M3.500 1h4.500v9h-4.500z" fill="#ffe41a"/><path d="M5 1v9" stroke="#fff7a0" stroke-width="1"/><path d="M0 5.800l3.500-2M0 8.200l3.500-2M1.800 2v9" stroke="#ffc070" stroke-width=".7"/></g><path d="M6 10h9.500l1-1v3l-1 1.500h-9.500z" fill="#4a4a4a"/><path d="M6 10l1-1h9.500l-1 1z" fill="#777"/><path d="M7.500 12h1.200M9.700 12h1.200M11.900 12h1.200" stroke="#ddd"/></g><g transform="translate(336,50)"><g transform="translate(1,1)"><path d="M0 3.500l3.500-3.500h4.500v9.500h-4.500l-3.500 2z" fill="#f4901c"/><path d="M3.500 1h4.500v9h-4.500z" fill="#ffe41a"/><path d="M5 1v9" stroke="#fff7a0" stroke-width="1"/><path d="M0 5.800l3.500-2M0 8.200l3.500-2M1.800 2v9" stroke="#ffc070" stroke-width=".7"/></g><ellipse cx="7.5" cy="14" rx="3.400" ry="1.500" fill="#f2c21a" stroke="#5a3a08" stroke-width=".9"/><path d="M5.5 13.7h2.500" stroke="#fff3b0" stroke-width=".7"/><ellipse cx="7.5" cy="11.4" rx="3.400" ry="1.500" fill="#f2c21a" stroke="#5a3a08" stroke-width=".9"/><path d="M5.5 11.1h2.500" stroke="#fff3b0" stroke-width=".7"/><ellipse cx="7.5" cy="8.8" rx="3.400" ry="1.500" fill="#f2c21a" stroke="#5a3a08" stroke-width=".9"/><path d="M5.5 8.5h2.500" stroke="#fff3b0" stroke-width=".7"/><ellipse cx="7.5" cy="6.2" rx="3.400" ry="1.500" fill="#f2c21a" stroke="#5a3a08" stroke-width=".9"/><path d="M5.5 5.9h2.500" stroke="#fff3b0" stroke-width=".7"/><ellipse cx="13" cy="14.300" rx="3" ry="1.400" fill="#f7cf2a" stroke="#8a5a10" stroke-width=".8"/></g><path d="M357.5 49V67" stroke="#c9c3a4"/><path d="M358.5 49V67" stroke="#fbf9ef"/><g transform="translate(364,50)"><rect x="1" y="1" width="9.500" height="11.500" fill="#fff" stroke="#2f8ae0" stroke-width="1.600"/><path d="M3 5.500h6M3 7.500h6" stroke="#38c0f0" stroke-width="1.200"/><g transform="translate(11.5,1.5) scale(0.75)"><path d="M-5 10.500q0-6.500 5-6.500q5 0 5 6.500z" fill="#2b50c8"/><path d="M-1.500 4.500l1.500 2l1.500-2z" fill="#fff"/><circle cx="0" cy="2.300" r="2.600" fill="#f6d4b4"/><path d="M-2.900 2.500q-.2-4 2.900-4q3.100 0 2.900 4q-.5-2.500-2.900-2.500q-2.400 0-2.900 2.500" fill="#5a2410"/></g><g transform="translate(2.500,1.500) scale(.9,1)"><path d="M0 9.500h13l-3 5h-7z" fill="#f0f0f0" stroke="#3a3a3a" stroke-width="1"/><path d="M3 10l1.500 4M6 10l.5 4M9.500 10l-1 4M1.500 12h10" stroke="#3a3a3a" stroke-width=".7"/><path d="M11.500 10l3-3.500" stroke="#3a3a3a" stroke-width="1.300"/></g></g><g transform="translate(387,50)"><path d="M0 1.5h7l1.500-1.500v4l-1.500 1.500h-7z" fill="#2a2ab0"/><path d="M0 1.5l1.500-1.500h7l-1.500 1.500z" fill="#5050e0"/><path d="M1.5 3.5h1M3.5 3.5h1M5.5 3.5h1" stroke="#fff" stroke-width="1"/><path d="M3 4l5 5" stroke="#1f8a1f" stroke-width="2.200"/><path d="M10.5 12h-5.500l5.500-5.500z" fill="#5ad03a" stroke="#1f7a1f" stroke-width=".7"/><path d="M11 11h5v5h-5z" fill="#e8202a"/><path d="M11 11l1.500-1.500h5l-1.500 1.500zM16 11l1.500-1.500v5l-1.500 1.500z" fill="#a81018"/></g><g transform="translate(410,50)"><rect x="1" y="1" width="9.500" height="11.500" fill="#fff" stroke="#2f8ae0" stroke-width="1.600"/><path d="M3 5.500h6M3 7.500h6" stroke="#38c0f0" stroke-width="1.200"/><g transform="translate(11.5,1.5) scale(0.75)"><path d="M-5 10.500q0-6.500 5-6.500q5 0 5 6.500z" fill="#e8202a"/><path d="M-1.500 4.500l1.500 2l1.500-2z" fill="#fff"/><circle cx="0" cy="2.300" r="2.600" fill="#f6d4b4"/><path d="M-2.900 2.500q-.2-4 2.900-4q3.100 0 2.900 4q-.5-2.500-2.900-2.500q-2.400 0-2.900 2.500" fill="#5a2410"/></g><g transform="translate(2.500,1.500) scale(.9,1)"><path d="M0 9.500h13l-3 5h-7z" fill="#f0f0f0" stroke="#3a3a3a" stroke-width="1"/><path d="M3 10l1.500 4M6 10l.5 4M9.500 10l-1 4M1.500 12h10" stroke="#3a3a3a" stroke-width=".7"/><path d="M11.500 10l3-3.500" stroke="#3a3a3a" stroke-width="1.300"/></g></g><g transform="translate(433,50)"><path d="M0 1.5h5v5h-5z" fill="#e8202a"/><path d="M0 1.5l1.500-1.500h5l-1.500 1.500zM5 1.5l1.500-1.500v5l-1.500 1.500z" fill="#a81018"/><path d="M4 4l5 5" stroke="#1f8a1f" stroke-width="2.200"/><path d="M11.5 12h-5.500l5.500-5.500z" fill="#5ad03a" stroke="#1f7a1f" stroke-width=".7"/><path d="M7 12h7l1.500-1.500v4l-1.500 1.500h-7z" fill="#2a2ab0"/><path d="M7 12l1.500-1.500h7l-1.500 1.500z" fill="#5050e0"/><path d="M8.5 14h1M10.5 14h1M12.5 14h1" stroke="#fff" stroke-width="1"/></g><g transform="translate(456,50)"><path d="M0 1.5h5v5h-5z" fill="#e8202a"/><path d="M0 1.5l1.500-1.500h5l-1.500 1.500zM5 1.5l1.500-1.500v5l-1.500 1.500z" fill="#a81018"/><path d="M4 4l5 5" stroke="#1f8a1f" stroke-width="2.200"/><path d="M11.5 12h-5.500l5.500-5.500z" fill="#5ad03a" stroke="#1f7a1f" stroke-width=".7"/><path d="M7 12h7l1.500-1.500v4l-1.500 1.500h-7z" fill="#3a78e8"/><path d="M7 12l1.500-1.500h7l-1.500 1.500z" fill="#7ab0ff"/><path d="M8.5 14h1M10.5 14h1M12.5 14h1" stroke="#fff" stroke-width="1"/></g><g transform="translate(479,50)"><ellipse cx="4" cy="14" rx="3.400" ry="1.500" fill="#f2c21a" stroke="#5a3a08" stroke-width=".9"/><path d="M2 13.7h2.500" stroke="#fff3b0" stroke-width=".7"/><ellipse cx="4" cy="11.4" rx="3.400" ry="1.500" fill="#f2c21a" stroke="#5a3a08" stroke-width=".9"/><path d="M2 11.1h2.500" stroke="#fff3b0" stroke-width=".7"/><ellipse cx="4" cy="8.8" rx="3.400" ry="1.500" fill="#f2c21a" stroke="#5a3a08" stroke-width=".9"/><path d="M2 8.5h2.500" stroke="#fff3b0" stroke-width=".7"/><ellipse cx="4" cy="6.2" rx="3.400" ry="1.500" fill="#f2c21a" stroke="#5a3a08" stroke-width=".9"/><path d="M2 5.9h2.500" stroke="#fff3b0" stroke-width=".7"/><ellipse cx="4" cy="3.6" rx="3.400" ry="1.500" fill="#f2c21a" stroke="#5a3a08" stroke-width=".9"/><path d="M2 3.3h2.500" stroke="#fff3b0" stroke-width=".7"/><ellipse cx="11" cy="14" rx="3.400" ry="1.500" fill="#f2c21a" stroke="#5a3a08" stroke-width=".9"/><path d="M9 13.7h2.500" stroke="#fff3b0" stroke-width=".7"/><ellipse cx="11" cy="11.4" rx="3.400" ry="1.500" fill="#f2c21a" stroke="#5a3a08" stroke-width=".9"/><path d="M9 11.1h2.500" stroke="#fff3b0" stroke-width=".7"/><path d="M4 2q5-4 8 2" stroke="#1f5f98" stroke-width="1.300" fill="none"/><path d="M10 4.500h4v-3.500z" fill="#1f5f98"/></g><g transform="translate(502,50)"><path d="M.5 .5h6l3 3v9h-9z" fill="#f4f4f4" stroke="#b8b8b8"/><rect x="5" y="7" width="10" height="7.500" fill="#2f9a2f" stroke="#1a6a1a" stroke-width=".7"/><path d="M4 14.500l2-2" stroke="#1a6a1a"/><ellipse cx="10" cy="12.5" rx="3.400" ry="1.500" fill="#f2c21a" stroke="#5a3a08" stroke-width=".9"/><path d="M8 12.2h2.500" stroke="#fff3b0" stroke-width=".7"/><ellipse cx="10" cy="9.9" rx="3.400" ry="1.500" fill="#f2c21a" stroke="#5a3a08" stroke-width=".9"/><path d="M8 9.6h2.500" stroke="#fff3b0" stroke-width=".7"/><ellipse cx="10" cy="7.3" rx="3.400" ry="1.500" fill="#f2c21a" stroke="#5a3a08" stroke-width=".9"/><path d="M8 7h2.500" stroke="#fff3b0" stroke-width=".7"/></g><g transform="translate(525,50)"><path d="M0 1.5h7l1.500-1.500v4l-1.500 1.500h-7z" fill="#2a2ab0"/><path d="M0 1.5l1.500-1.500h7l-1.500 1.500z" fill="#5050e0"/><path d="M1.5 3.5h1M3.5 3.5h1M5.5 3.5h1" stroke="#fff" stroke-width="1"/><path d="M3 4l5 5" stroke="#1f8a1f" stroke-width="2.200"/><path d="M10.5 12h-5.500l5.500-5.500z" fill="#5ad03a" stroke="#1f7a1f" stroke-width=".7"/><path d="M7 12.5h7l1.500-1.500v4l-1.500 1.500h-7z" fill="#e8822a"/><path d="M7 12.5l1.500-1.500h7l-1.500 1.500z" fill="#ffb060"/><path d="M8.5 14.5h1M10.5 14.5h1M12.5 14.5h1" stroke="#fff" stroke-width="1"/></g><g transform="translate(548,50)"><rect x="1" y="1" width="9.500" height="11.500" fill="#fff" stroke="#2f8ae0" stroke-width="1.600"/><path d="M3 5.500h6M3 7.500h6" stroke="#38c0f0" stroke-width="1.200"/><path d="M5 3q5-2 7 4" stroke="#1f4f90" stroke-width="1.200" fill="none"/><path d="M10.500 7h3.500l-1-3z" fill="#1f4f90"/><ellipse cx="12" cy="14" rx="3.400" ry="1.500" fill="#f2c21a" stroke="#5a3a08" stroke-width=".9"/><path d="M10 13.7h2.500" stroke="#fff3b0" stroke-width=".7"/><ellipse cx="12" cy="11.4" rx="3.400" ry="1.500" fill="#f2c21a" stroke="#5a3a08" stroke-width=".9"/><path d="M10 11.1h2.500" stroke="#fff3b0" stroke-width=".7"/><ellipse cx="12" cy="8.8" rx="3.400" ry="1.500" fill="#f2c21a" stroke="#5a3a08" stroke-width=".9"/><path d="M10 8.5h2.500" stroke="#fff3b0" stroke-width=".7"/></g><g transform="translate(571,50)"><g transform="translate(5,2)"><rect x="1" y="1" width="9.500" height="11.500" fill="#fff" stroke="#2f8ae0" stroke-width="1.600"/><path d="M3 5.500h6M3 7.500h6" stroke="#38c0f0" stroke-width="1.200"/></g><ellipse cx="4" cy="6" rx="3.400" ry="1.500" fill="#f2c21a" stroke="#5a3a08" stroke-width=".9"/><path d="M2 5.7h2.500" stroke="#fff3b0" stroke-width=".7"/><ellipse cx="4" cy="3.4" rx="3.400" ry="1.500" fill="#f2c21a" stroke="#5a3a08" stroke-width=".9"/><path d="M2 3.1h2.500" stroke="#fff3b0" stroke-width=".7"/><ellipse cx="4" cy="0.8" rx="3.400" ry="1.500" fill="#f2c21a" stroke="#5a3a08" stroke-width=".9"/><path d="M2 0.5h2.500" stroke="#fff3b0" stroke-width=".7"/><path d="M9 13q-5 1-6-4" stroke="#1f4f90" stroke-width="1.200" fill="none"/><path d="M1 10l2.500-2.500l1.500 3z" fill="#1f4f90"/></g><g transform="translate(594,50)"><path d="M5 0h3v3h3v3h-3v3h-3v-3h-3v-3h3z" fill="#2fc02f" stroke="#1a8a1a" stroke-width=".6"/><path d="M7 8h8v8h-10z" fill="#c8c8c8"/><ellipse cx="11" cy="14.5" rx="3.400" ry="1.500" fill="#f2c21a" stroke="#5a3a08" stroke-width=".9"/><path d="M9 14.2h2.500" stroke="#fff3b0" stroke-width=".7"/><ellipse cx="11" cy="11.9" rx="3.400" ry="1.500" fill="#f2c21a" stroke="#5a3a08" stroke-width=".9"/><path d="M9 11.6h2.500" stroke="#fff3b0" stroke-width=".7"/><ellipse cx="11" cy="9.3" rx="3.400" ry="1.500" fill="#f2c21a" stroke="#5a3a08" stroke-width=".9"/><path d="M9 9h2.500" stroke="#fff3b0" stroke-width=".7"/></g><g transform="translate(617,50)"><rect x="1" y="3.500" width="10" height="3" fill="#2fc02f" stroke="#1a8a1a" stroke-width=".6"/><path d="M7 8h8v8h-10z" fill="#c8c8c8"/><ellipse cx="11" cy="14.5" rx="3.400" ry="1.500" fill="#f2c21a" stroke="#5a3a08" stroke-width=".9"/><path d="M9 14.2h2.500" stroke="#fff3b0" stroke-width=".7"/><ellipse cx="11" cy="11.9" rx="3.400" ry="1.500" fill="#f2c21a" stroke="#5a3a08" stroke-width=".9"/><path d="M9 11.6h2.500" stroke="#fff3b0" stroke-width=".7"/><ellipse cx="11" cy="9.3" rx="3.400" ry="1.500" fill="#f2c21a" stroke="#5a3a08" stroke-width=".9"/><path d="M9 9h2.500" stroke="#fff3b0" stroke-width=".7"/></g><g transform="translate(640,50)"><g transform="translate(2,0)"><rect x="1" y="1" width="9.500" height="11.500" fill="#fff" stroke="#2f8ae0" stroke-width="1.600"/><path d="M3 5.500h6M3 7.500h6" stroke="#38c0f0" stroke-width="1.200"/></g><ellipse cx="4" cy="15" rx="3.400" ry="1.500" fill="#f2c21a" stroke="#5a3a08" stroke-width=".9"/><path d="M2 14.7h2.500" stroke="#fff3b0" stroke-width=".7"/><ellipse cx="4" cy="12.4" rx="3.400" ry="1.500" fill="#f2c21a" stroke="#5a3a08" stroke-width=".9"/><path d="M2 12.1h2.500" stroke="#fff3b0" stroke-width=".7"/><ellipse cx="4" cy="9.8" rx="3.400" ry="1.500" fill="#f2c21a" stroke="#5a3a08" stroke-width=".9"/><path d="M2 9.5h2.500" stroke="#fff3b0" stroke-width=".7"/><path d="M8 8l3 3l5-6" stroke="#1fa81f" stroke-width="2.200" fill="none"/></g><path d="M681 50l3 2.500l-3 2.500M685 50l3 2.500l-3 2.500" stroke="#3a2a14" stroke-width="1.300" fill="none"/><path d="M680 63h9l-4.5 4.5z" fill="#3a2a14"/><rect x="697" y="51" width="3" height="1" fill="#c4bc98"/><rect x="697" y="53" width="3" height="1" fill="#c4bc98"/><rect x="697" y="55" width="3" height="1" fill="#c4bc98"/><rect x="697" y="57" width="3" height="1" fill="#c4bc98"/><rect x="697" y="59" width="3" height="1" fill="#c4bc98"/><rect x="697" y="61" width="3" height="1" fill="#c4bc98"/><rect x="697" y="63" width="3" height="1" fill="#c4bc98"/><g transform="translate(706,50)"><rect x=".5" y="1.500" width="10" height="12" fill="#fff" stroke="#999"/><text x="1.500" y="11" font-size="9" fill="#222" font-family="'Liberation Sans',sans-serif">Σ</text><g transform="translate(11.5,0) scale(0.8)"><path d="M-5 10.500q0-6.500 5-6.500q5 0 5 6.500z" fill="#2b50c8"/><path d="M-1.500 4.500l1.500 2l1.500-2z" fill="#fff"/><circle cx="0" cy="2.300" r="2.600" fill="#f6d4b4"/><path d="M-2.900 2.500q-.2-4 2.900-4q3.100 0 2.900 4q-.5-2.500-2.900-2.500q-2.400 0-2.900 2.500" fill="#5a2410"/></g><path d="M9 10.5h5v5h-5z" fill="#e8202a"/><path d="M9 10.5l1.500-1.500h5l-1.500 1.500zM14 10.5l1.500-1.500v5l-1.500 1.500z" fill="#a81018"/></g><path d="M728 50l3 2.500l-3 2.500M732 50l3 2.500l-3 2.500" stroke="#3a2a14" stroke-width="1.300" fill="none"/><path d="M727 63h9l-4.5 4.5z" fill="#3a2a14"/><rect x="744" y="51" width="3" height="1" fill="#c4bc98"/><rect x="744" y="53" width="3" height="1" fill="#c4bc98"/><rect x="744" y="55" width="3" height="1" fill="#c4bc98"/><rect x="744" y="57" width="3" height="1" fill="#c4bc98"/><rect x="744" y="59" width="3" height="1" fill="#c4bc98"/><rect x="744" y="61" width="3" height="1" fill="#c4bc98"/><rect x="744" y="63" width="3" height="1" fill="#c4bc98"/><g transform="translate(754,50)"><rect x="3.500" y="1.500" width="9" height="11" rx="1" fill="#e8d8b8" stroke="#8a7a5a"/><path d="M5 4.500h6M5 6.500h6M5 8.500h6" stroke="#8a7a5a"/><path d="M3 11q-4-4 1-8" stroke="#1fa83a" stroke-width="1.600" fill="none"/><path d="M2 1.500l4 .5l-2.500 3z" fill="#1fa83a"/><path d="M12.500 5q4 4-1 8" stroke="#1fa83a" stroke-width="1.600" fill="none"/><path d="M13.500 14.500l-4-.5l2.500-3z" fill="#1fa83a"/></g><g transform="translate(777,50)"><rect x="9" y="1" width="5.500" height="9" fill="url(#gcyl)" stroke="#c9a030" stroke-width=".6"/><rect x="1" y="9" width="5" height="6" rx="1" fill="#3a78e8" stroke="#1f4fb0" stroke-width=".6"/><path d="M6 3h-2.500v4" stroke="#1f8a1f" stroke-width="1.300" fill="none"/><path d="M1.500 6h4l-2 2.500z" fill="#1f8a1f"/><path d="M8 14h3v-3" stroke="#1f8a1f" stroke-width="1.300" fill="none"/><path d="M9 11.500h4l-2-2.500z" fill="#1f8a1f"/></g><path d="M797.5 49V67" stroke="#c9c3a4"/><path d="M798.5 49V67" stroke="#fbf9ef"/><g transform="translate(804,50)"><path d="M1 15l5-12l5 12z" fill="#8a3aa8"/><path d="M6 3l2.500 6l2.500 6h-3z" fill="#5a2080"/><circle cx="5" cy="10" r=".8" fill="#ffd84a"/><circle cx="7.500" cy="13" r=".8" fill="#ffd84a"/><path d="M8 4l7 7" stroke="#999" stroke-width="1.200"/><path d="M8.500 1v5M6 3.500h5" stroke="#f0c020" stroke-width="1.200"/></g><g transform="translate(828,50)"><rect x="9" y="1" width="5.500" height="9" fill="url(#gcyl)" stroke="#c9a030" stroke-width=".6"/><rect x="1" y="9" width="5" height="6" rx="1" fill="#3a78e8" stroke="#1f4fb0" stroke-width=".6"/><path d="M6 3h-2.500v4" stroke="#1f8a1f" stroke-width="1.300" fill="none"/><path d="M1.500 6h4l-2 2.500z" fill="#1f8a1f"/><path d="M8 14h3v-3" stroke="#1f8a1f" stroke-width="1.300" fill="none"/><path d="M9 11.500h4l-2-2.500z" fill="#1f8a1f"/></g><path d="M848.5 49V67" stroke="#c9c3a4"/><path d="M849.5 49V67" stroke="#fbf9ef"/><g transform="translate(855,50)"><circle cx="6" cy="6" r="4" fill="#3fa83f"/><path d="M1 5q4-7 9-2" stroke="#1f3fb8" stroke-width="1.800" fill="none"/><path d="M11 9q-4 6-9 2" stroke="#1f3fb8" stroke-width="1.800" fill="none"/><rect x="8" y="5" width="8" height="11" fill="#f7c81a"/><path d="M10 7h4M12 7v7M10.500 10h3M10.500 12.500h3" stroke="#d8201a" stroke-width="1.400"/></g><path d="M876.5 49V67" stroke="#c9c3a4"/><path d="M877.5 49V67" stroke="#fbf9ef"/><g transform="translate(883,50)"><circle cx="6" cy="6" r="4" fill="#3fa83f"/><path d="M1 5q4-7 9-2" stroke="#1f3fb8" stroke-width="1.800" fill="none"/><path d="M11 9q-4 6-9 2" stroke="#1f3fb8" stroke-width="1.800" fill="none"/><rect x="9" y="5" width="7" height="11" fill="#f7c81a"/><circle cx="12.500" cy="8" r="1.300" fill="#d8201a"/><path d="M10.500 10h4v2.500h-1v3h-2v-3h-1z" fill="#d8201a"/></g><path d="M904.5 49V67" stroke="#c9c3a4"/><path d="M905.5 49V67" stroke="#fbf9ef"/><g transform="translate(911,50)"><rect x="0" y="0" width="6" height="8" rx="1.500" fill="#f2c83a" stroke="#b8902a" stroke-width=".7"/><ellipse cx="3" cy="1" rx="3" ry="1.300" fill="#ffe890" stroke="#b8902a" stroke-width=".5"/><path d="M4 5h8v2.500h-8z" fill="#888"/><path d="M7.500 7v9" stroke="#9a6a3a" stroke-width="1.800"/><circle cx="12" cy="12" r="3.800" fill="#2fa83f"/><path d="M11 8.5q2 1 1 3.500q2 1 1.500 3" stroke="#bfe8bf" fill="none"/></g><g transform="translate(934,50)"><rect x="0" y="0" width="6" height="8" rx="1.500" fill="#f2c83a" stroke="#b8902a" stroke-width=".7"/><ellipse cx="3" cy="1" rx="3" ry="1.300" fill="#ffe890" stroke="#b8902a" stroke-width=".5"/><circle cx="12" cy="12" r="3.800" fill="#2fa83f"/><path d="M11 8.5q2 1 1 3.500q2 1 1.500 3" stroke="#bfe8bf" fill="none"/><path d="M8 3h4l-1-2M6 12h-4l1 2" stroke="#1f8a3a" stroke-width="1.300" fill="none"/></g><path d="M955.5 49V67" stroke="#c9c3a4"/><path d="M956.5 49V67" stroke="#fbf9ef"/><g transform="translate(962,50)"><path d="M1 15l5-12l5 12z" fill="#8a3aa8"/><path d="M6 3l2.500 6l2.500 6h-3z" fill="#5a2080"/><circle cx="5" cy="10" r=".8" fill="#ffd84a"/><circle cx="7.500" cy="13" r=".8" fill="#ffd84a"/><path d="M8 4l7 7" stroke="#999" stroke-width="1.200"/><path d="M8.500 1v5M6 3.500h5" stroke="#f0c020" stroke-width="1.200"/></g><g transform="translate(986,50)"><rect x="9" y="1" width="5.500" height="9" fill="url(#gcyl)" stroke="#c9a030" stroke-width=".6"/><rect x="1" y="9" width="5" height="6" rx="1" fill="#3a78e8" stroke="#1f4fb0" stroke-width=".6"/><path d="M6 3h-2.500v4" stroke="#1f8a1f" stroke-width="1.300" fill="none"/><path d="M1.500 6h4l-2 2.500z" fill="#1f8a1f"/><path d="M8 14h3v-3" stroke="#1f8a1f" stroke-width="1.300" fill="none"/><path d="M9 11.500h4l-2-2.500z" fill="#1f8a1f"/></g><path d="M1006 63h8l-4 4z" fill="#3a2a14"/><path d="M46 83h6l-3 3z" fill="#3a2a14"/><path d="M128 83h6l-3 3z" fill="#3a2a14"/><path d="M182 83h6l-3 3z" fill="#3a2a14"/><path d="M258 83h6l-3 3z" fill="#3a2a14"/><path d="M305 83h6l-3 3z" fill="#3a2a14"/><path d="M413 89h8l-4 4z" fill="#3a2a14"/><path d="M1006.500 101l8 8M1014.500 101l-8 8" stroke="#222" stroke-width="1.900"/><path d="M992.500 102.500v4h2.500v-4zM993.700 106.500v2" stroke="#f4f4f4" stroke-width="1" fill="none"/><g transform="translate(1,99)"><rect x=".5" y=".5" width="12" height="13" fill="#f4f6f8" stroke="#8a98a8"/><path d="M3 4.500h7M3 6.500h7M3 8.500h7M3 10.500h7" stroke="#b8c4d0"/></g><path d="M895 130h8l-4 4z" fill="#4a3418"/><path d="M414 180h8l-4 4z" fill="#4a3418"/><path d="M968 180h8l-4 4z" fill="#4a3418"/><g transform="translate(912,124)"><rect x="1.500" y="1" width="13" height="15" rx="5" fill="url(#ginfo)" stroke="#c9903a"/><text x="5" y="13" font-size="11" font-weight="bold" fill="#a8601a" font-family="'Liberation Sans',sans-serif">?</text></g><g transform="translate(937,126)"><path d="M2 5.500q1.500-4 5.500-4q2.500 0 4 2" stroke="#2a7a2a" stroke-width="1.300" fill="none"/><path d="M13.500 1.500v4.500h-4.500z" fill="#2a7a2a"/><path d="M12.500 7.500q-1.500 4-5.500 4q-2.500 0-4-2" stroke="#2a7a2a" stroke-width="1.300" fill="none"/><path d="M1 11.500v-4.500h4.500z" fill="#2a7a2a"/></g><path d="M984.500 153.5l6 6M990.500 153.5l-6 6" stroke="#5a400c" stroke-width="1.700"/><circle cx="1001" cy="155" r="3.200" fill="#fbf8ee" stroke="#5a400c" stroke-width="1.200"/><path d="M1003.200 157.5l3 3.500" stroke="#5a400c" stroke-width="1.700"/><path d="M984.500 178.5l6 6M990.500 178.5l-6 6" stroke="#5a400c" stroke-width="1.700"/><circle cx="1001" cy="180" r="3.200" fill="#fbf8ee" stroke="#5a400c" stroke-width="1.200"/><path d="M1003.200 182.5l3 3.500" stroke="#5a400c" stroke-width="1.700"/><path d="M968 161.500h1.800M971.500 161.500h1.800M975 161.500h1.800" stroke="#5a400c" stroke-width="1.700"/><g transform="translate(119,198)"><circle cx="7.500" cy="7.500" r="7" fill="url(#ggreen)" stroke="#7a9a6a"/><path d="M7.500 3.500v8M3.500 7.500h8" stroke="#fff" stroke-width="2.200"/></g><g transform="translate(142,198)"><path d="M.5 3q0-1 1-1h3.500l1.500 1.500h5.500q1 0 1 1v7q0 1-1 1h-11q-1 0-1-1z" fill="url(#gfold)" stroke="#c9a040"/><path d="M11.500 8v7M8 11.500h7" stroke="#2a8a2a" stroke-width="2.200"/></g><g transform="translate(165,198)"><path d="M1.500 .5h7l3 3v10h-10z" fill="#eef3f8" stroke="#7a90a8"/><path d="M3.500 4h4M3.500 6h5M3.500 8h4" stroke="#a8b8c8"/><circle cx="11.500" cy="11" r="4" fill="#5ab05a" stroke="#3a8a3a" stroke-width=".8"/><path d="M11.500 8.500v5M9 11h5" stroke="#fff" stroke-width="1.500"/></g><g transform="translate(188,198)"><path d="M2.500 13.500l1.500-4.500l6.500-6.500l3 3l-6.500 6.500z" fill="#2fa52f" stroke="#1f7a1f" stroke-width=".8"/><path d="M1.500 14.500l2-5l3 3z" fill="#222"/><path d="M5 9.500l5.500-5.500" stroke="#8ae08a" stroke-width="1"/></g><g transform="translate(211,198)"><path d="M.5 .5h9l3 3v11.500h-12z" fill="#f4f8fc" stroke="#8aa0b8"/><path d="M3.500 5.500l6 6.500M9.500 5.500l-6 6.500" stroke="#d8201a" stroke-width="2"/></g><path d="M230.5 197V216" stroke="#c9c3a4"/><path d="M231.5 197V216" stroke="#fbf9ef"/><g transform="translate(239,198)"><path d="M1.500 1.500q0-1 1-1h2.500l1 1h3q1 0 1 1v4.500h-8.500z" fill="url(#gfold)" stroke="#c9a040"/><path d="M1 9.500h14" stroke="#8a98a8"/><rect x="6.500" y="11.500" width="8.500" height="3" rx="1.500" fill="#a8c0d8" stroke="#6a88a8" stroke-width=".8"/></g><g transform="translate(261,198)"><path d="M.5 5.500q0-1 1-1h2.500l1 1h3q1 0 1 1v4.500h-8.500z" fill="url(#gfold)" stroke="#c9a040"/><path d="M5 4q1-4 5-3q4 1 4 9" stroke="#2a5a7a" stroke-width="1.400" fill="none"/><path d="M3.500 4.500l3.500-3l.5 4z" fill="#2a5a7a"/><rect x="7.500" y="11.500" width="8" height="3" rx="1.500" fill="#a8c0d8" stroke="#6a88a8" stroke-width=".8"/></g><path d="M283.5 197V216" stroke="#c9c3a4"/><path d="M284.5 197V216" stroke="#fbf9ef"/><g transform="translate(289,198)"><rect x="1.500" y="5.500" width="9" height="9" fill="#fff" stroke="#6a88b0"/><path d="M3 8.500h3M3 10.500h3M3 12.500h5" stroke="#8aa8d0"/><path d="M2 .5h12l-4.500 5v8l-3-1.500v-6.500z" fill="url(#gfun)" stroke="#6a6a6a" stroke-width=".7"/><path d="M13.500 6v8M11.500 12l2 2.500l2-2.500" stroke="#2a4a6a" stroke-width="1.200" fill="none"/></g><g transform="translate(313,198)"><path d="M2 .5h12l-4.500 5v7.500l-3-2v-5.500z" fill="#c4c4c4"/><rect x="8.500" y="8.500" width="6" height="6" fill="#e4e8ee" stroke="#b8c0cc"/></g><g transform="translate(335,198)"><rect x="1.500" y="5.500" width="9" height="9" fill="#fff" stroke="#6a88b0"/><path d="M3 8.500h3M3 10.500h3M3 12.500h5" stroke="#8aa8d0"/><rect x="9.500" y="6.500" width="6" height="8" fill="#fff" stroke="#6a88b0"/><path d="M11 9.500h3M11 11.500h3" stroke="#8aa8d0"/><path d="M2 .5h12l-4.500 5v8l-3-1.500v-6.500z" fill="url(#gfun)" stroke="#6a6a6a" stroke-width=".7"/></g><path d="M354 205h5l-2.5 2.5z" fill="#3a2a14"/><g transform="translate(365,198)"><path d="M2 .5h12l-4.500 5v7.500l-3-2v-5.500z" fill="#c4c4c4"/><path d="M9.500 9l5 5.500M14.500 9l-5 5.500" stroke="#b89090" stroke-width="1.800"/></g><path d="M388.5 197V216" stroke="#c9c3a4"/><path d="M389.5 197V216" stroke="#fbf9ef"/><g transform="translate(394,200)"><path d="M2 5.500q1.500-4 5.500-4q2.500 0 4 2" stroke="#2a7a2a" stroke-width="1.300" fill="none"/><path d="M13.500 1.500v4.500h-4.500z" fill="#2a7a2a"/><path d="M12.500 7.500q-1.500 4-5.500 4q-2.500 0-4-2" stroke="#2a7a2a" stroke-width="1.300" fill="none"/><path d="M1 11.500v-4.500h4.500z" fill="#2a7a2a"/></g><path d="M415.5 197V216" stroke="#c9c3a4"/><path d="M416.5 197V216" stroke="#fbf9ef"/><path d="M469 205h5l-2.5 2.5z" fill="#3a2a14"/><circle cx="44.5" cy="233.5" r="4" fill="#fff" stroke="#a8a8a8"/><path d="M42 233.5h5" stroke="#666"/><g transform="translate(57,227)"><path d="M.5 2q0-1.500 1.500-1.500h3l1.500 1.500h6q1.500 0 1.500 1.500v6.500q0 1.500-1.500 1.500h-10.500q-1.500 0-1.500-1.500z" fill="url(#gfold)" stroke="#d4ae52"/></g><circle cx="63.5" cy="252.5" r="4" fill="#fff" stroke="#a8a8a8"/><path d="M61 252.5h5" stroke="#666"/><path d="M63.5 250v5" stroke="#666"/><g transform="translate(76,246)"><path d="M.5 2q0-1.500 1.500-1.500h3l1.500 1.500h6q1.500 0 1.500 1.500v6.500q0 1.500-1.500 1.500h-10.500q-1.500 0-1.500-1.500z" fill="url(#gfold)" stroke="#d4ae52"/></g><circle cx="63.5" cy="271.5" r="4" fill="#fff" stroke="#a8a8a8"/><path d="M61 271.5h5" stroke="#666"/><path d="M63.5 269v5" stroke="#666"/><g transform="translate(76,265)"><path d="M.5 2q0-1.500 1.500-1.500h3l1.500 1.500h6q1.500 0 1.500 1.500v6.500q0 1.500-1.500 1.500h-10.500q-1.500 0-1.500-1.500z" fill="url(#gfold)" stroke="#d4ae52"/></g><circle cx="63.5" cy="290.5" r="4" fill="#fff" stroke="#a8a8a8"/><path d="M61 290.5h5" stroke="#666"/><path d="M63.5 288v5" stroke="#666"/><g transform="translate(76,284)"><path d="M.5 2q0-1.500 1.500-1.500h3l1.500 1.500h6q1.500 0 1.500 1.500v6.500q0 1.500-1.500 1.500h-10.500q-1.500 0-1.500-1.500z" fill="url(#gfold)" stroke="#d4ae52"/></g><circle cx="63.5" cy="309.5" r="4" fill="#fff" stroke="#a8a8a8"/><path d="M61 309.5h5" stroke="#666"/><path d="M63.5 307v5" stroke="#666"/><g transform="translate(76,303)"><path d="M.5 2q0-1.500 1.500-1.500h3l1.500 1.500h6q1.500 0 1.500 1.500v6.500q0 1.500-1.500 1.500h-10.500q-1.500 0-1.500-1.500z" fill="url(#gfold)" stroke="#d4ae52"/></g><circle cx="63.5" cy="328.5" r="4" fill="#fff" stroke="#a8a8a8"/><path d="M61 328.5h5" stroke="#666"/><path d="M63.5 326v5" stroke="#666"/><g transform="translate(76,322)"><path d="M.5 2q0-1.500 1.500-1.500h3l1.500 1.500h6q1.500 0 1.500 1.500v6.500q0 1.500-1.500 1.500h-10.500q-1.500 0-1.500-1.500z" fill="url(#gfold)" stroke="#d4ae52"/></g><path d="M76.500 343v-1q0-1 1.500-1h3l1 1" fill="#f7dc8a" stroke="#d4ae52"/><path d="M41 380.5h3M43.500 380v4" stroke="#111" stroke-width="1.200" fill="none"/><path d="M41 383h5l-2.500 3z" fill="#111"/><g transform="translate(51,376)"><path d="M.5 2q0-1.500 1.500-1.500h3l1.500 1.500h6q1.500 0 1.500 1.500v6.500q0 1.500-1.500 1.500h-10.500q-1.500 0-1.500-1.500z" fill="url(#gfold)" stroke="#d4ae52"/></g><path d="M41 399.5h3M43.500 399v4" stroke="#111" stroke-width="1.200" fill="none"/><path d="M41 402h5l-2.500 3z" fill="#111"/><g transform="translate(51,395)"><path d="M.5 2q0-1.500 1.500-1.500h3l1.500 1.500h6q1.500 0 1.500 1.500v6.500q0 1.500-1.500 1.500h-10.500q-1.500 0-1.500-1.500z" fill="url(#gfold)" stroke="#d4ae52"/></g><path d="M41 418.5h3M43.500 418v4" stroke="#111" stroke-width="1.200" fill="none"/><path d="M41 421h5l-2.500 3z" fill="#111"/><g transform="translate(51,414)"><path d="M.5 2q0-1.500 1.500-1.500h3l1.500 1.500h6q1.500 0 1.500 1.500v6.500q0 1.500-1.500 1.500h-10.500q-1.500 0-1.500-1.500z" fill="url(#gfold)" stroke="#d4ae52"/></g><path d="M41 437.5h3M43.500 437v4" stroke="#111" stroke-width="1.200" fill="none"/><path d="M41 440h5l-2.500 3z" fill="#111"/><g transform="translate(51,433)"><path d="M.5 2q0-1.500 1.500-1.500h3l1.500 1.500h6q1.500 0 1.500 1.500v6.500q0 1.500-1.500 1.500h-10.500q-1.500 0-1.500-1.500z" fill="url(#gfold)" stroke="#d4ae52"/></g><path d="M41 456.5h3M43.500 456v4" stroke="#111" stroke-width="1.200" fill="none"/><path d="M41 459h5l-2.500 3z" fill="#111"/><g transform="translate(51,452)"><path d="M.5 2q0-1.500 1.500-1.500h3l1.500 1.500h6q1.500 0 1.500 1.500v6.500q0 1.500-1.500 1.500h-10.500q-1.500 0-1.500-1.500z" fill="url(#gfold)" stroke="#d4ae52"/></g><path d="M41 475.5h3M43.500 475v4" stroke="#111" stroke-width="1.200" fill="none"/><path d="M41 478h5l-2.500 3z" fill="#111"/><g transform="translate(51,471)"><path d="M.5 2q0-1.500 1.500-1.500h3l1.500 1.500h6q1.500 0 1.500 1.500v6.500q0 1.500-1.500 1.500h-10.500q-1.500 0-1.500-1.500z" fill="url(#gfold)" stroke="#d4ae52"/></g><path d="M41 494.5h3M43.500 494v4" stroke="#111" stroke-width="1.200" fill="none"/><path d="M41 497h5l-2.500 3z" fill="#111"/><g transform="translate(51,490)"><path d="M.5 2q0-1.500 1.500-1.500h3l1.500 1.500h6q1.500 0 1.500 1.500v6.500q0 1.500-1.500 1.500h-10.500q-1.500 0-1.500-1.500z" fill="url(#gfold)" stroke="#d4ae52"/></g><path d="M41 513.5h3M43.500 513v4" stroke="#111" stroke-width="1.200" fill="none"/><path d="M41 516h5l-2.500 3z" fill="#111"/><g transform="translate(51,509)"><path d="M.5 2q0-1.500 1.500-1.500h3l1.500 1.500h6q1.500 0 1.500 1.500v6.500q0 1.500-1.500 1.500h-10.500q-1.500 0-1.500-1.500z" fill="url(#gfold)" stroke="#d4ae52"/></g><path d="M41 532.5h3M43.500 532v4" stroke="#111" stroke-width="1.200" fill="none"/><path d="M41 535h5l-2.500 3z" fill="#111"/><g transform="translate(51,528)"><path d="M.5 2q0-1.500 1.500-1.500h3l1.500 1.500h6q1.500 0 1.500 1.500v6.500q0 1.500-1.500 1.500h-10.500q-1.500 0-1.500-1.500z" fill="url(#gfold)" stroke="#d4ae52"/></g><path d="M41 551.5h3M43.500 551v4" stroke="#111" stroke-width="1.200" fill="none"/><path d="M41 554h5l-2.500 3z" fill="#111"/><g transform="translate(51,547)"><path d="M.5 2q0-1.500 1.500-1.500h3l1.500 1.500h6q1.500 0 1.500 1.500v6.500q0 1.500-1.500 1.500h-10.500q-1.500 0-1.500-1.500z" fill="url(#gfold)" stroke="#d4ae52"/></g><rect x="53" y="570" width="9.500" height="3.500" rx="1.750" fill="#b4c8e4" stroke="#7890b8" stroke-width=".9"/><path d="M528 360.500h4M526 363h8M524.500 365.500h11" stroke="#c9b060" stroke-width="1.400"/><path d="M999.5 236.5l4-4l4 4" stroke="#8a7a50" stroke-width="1.500" fill="none"/><path d="M999.5 331l4 4l4-4" stroke="#8a7a50" stroke-width="1.500" fill="none"/><path d="M998.5 364.5l4-4l4 4" stroke="#8a7a50" stroke-width="1.500" fill="none"/><path d="M998.5 568l4 4l4-4" stroke="#8a7a50" stroke-width="1.500" fill="none"/><rect x="0.500" y="641.500" width="8" height="12" fill="#faf6e8" stroke="#efe9d0"/><rect x="9.500" y="641.500" width="8" height="12" fill="#faf6e8" stroke="#efe9d0"/><path d="M6 644.500l-3 3l3 3" stroke="#9a9484" stroke-width="1.200" fill="none"/><path d="M12 644.500l3 3l-3 3" stroke="#9a9484" stroke-width="1.200" fill="none"/></svg>
<svg width="1022" height="675" style="left:0;top:0" viewBox="0 0 1022 675" fill="none" stroke="#22b14c" stroke-width="3" stroke-linecap="round" stroke-linejoin="round">
<g fill="#22b14c" stroke="#22b14c" stroke-width="0.5" font-family="'Liberation Sans',sans-serif" letter-spacing="3">
<text x="626" y="218" font-size="28" textLength="120" lengthAdjust="spacingAndGlyphs">период</text>
<text x="860" y="215" font-size="25" textLength="31" lengthAdjust="spacingAndGlyphs">по</text>
<text transform="translate(485,272) rotate(3.2)" font-size="28" textLength="236" lengthAdjust="spacingAndGlyphs">допколонки</text>
<text transform="translate(555,313) rotate(4)" font-size="24" textLength="136" lengthAdjust="spacingAndGlyphs">продажи</text>
<text transform="translate(711,320) rotate(1.5)" font-size="29" textLength="296" lengthAdjust="spacingAndGlyphs">в заказах постав-у</text>
</g>
<path d="M758 198 L830 197 L831 216 L760 217 L757 208 Z"/>
<path d="M906 203 L965 202 L967 220 L908 222 Q902 212 906 203 Z"/>
<path d="M548 299 Q575 292 620 294 Q670 296 696 306 Q703 316 692 324 Q660 330 620 328 Q575 326 545 317 Q534 308 548 299 Z"/>
<path d="M716 294 Q850 294 985 299 Q1010 302 1011 320 Q1008 336 985 335 Q850 330 720 327 Q706 324 706 310 Q706 296 716 294 Z"/>
<path d="M614 329C614.0 331.5 615.3 340.7 614 344C612.7 347.3 609.7 348.0 606 349C602.3 350.0 596.3 350.3 592 350C587.7 349.7 584.3 347.3 580 347C575.7 346.7 570.3 347.5 566 348C561.7 348.5 556.8 348.3 554 350C551.2 351.7 550.5 355.0 549 358C547.5 361.0 545.7 366.3 545 368"/>
<path d="M614 338C614.8 339.3 616.0 344.5 619 346C622.0 347.5 626.5 346.8 632 347C637.5 347.2 647.3 346.0 652 347C656.7 348.0 658.2 349.8 660 353C661.8 356.2 662.2 359.8 663 366C663.8 372.2 663.3 383.5 665 390C666.7 396.5 671.5 400.3 673 405C674.5 409.7 674.2 412.2 674 418C673.8 423.8 673.7 432.0 672 440C670.3 448.0 666.5 457.3 664 466C661.5 474.7 658.2 483.3 657 492C655.8 500.7 656.2 508.8 657 518C657.8 527.2 660.7 537.5 662 547C663.3 556.5 664.5 570.3 665 575"/>
<path d="M729 331L729 349C724.2 348.8 708.2 347.7 700 348C691.8 348.3 685.2 349.7 680 351C674.8 352.3 671.5 353.8 669 356C666.5 358.2 665.7 362.7 665 364"/>
<path d="M729 338C729.5 339.7 729.8 346.2 732 348C734.2 349.8 736.7 349.2 742 349C747.3 348.8 759.2 346.3 764 347C768.8 347.7 769.2 349.8 771 353C772.8 356.2 773.2 360.8 775 366C776.8 371.2 780.8 372.8 782 384C783.2 395.2 782.3 420.0 782 433C781.7 446.0 780.8 451.5 780 462C779.2 472.5 777.7 481.8 777 496C776.3 510.2 775.7 536.0 776 547C776.3 558.0 778.0 557.5 779 562C780.0 566.5 781.5 572.0 782 574"/>
</svg>

</body></html>
